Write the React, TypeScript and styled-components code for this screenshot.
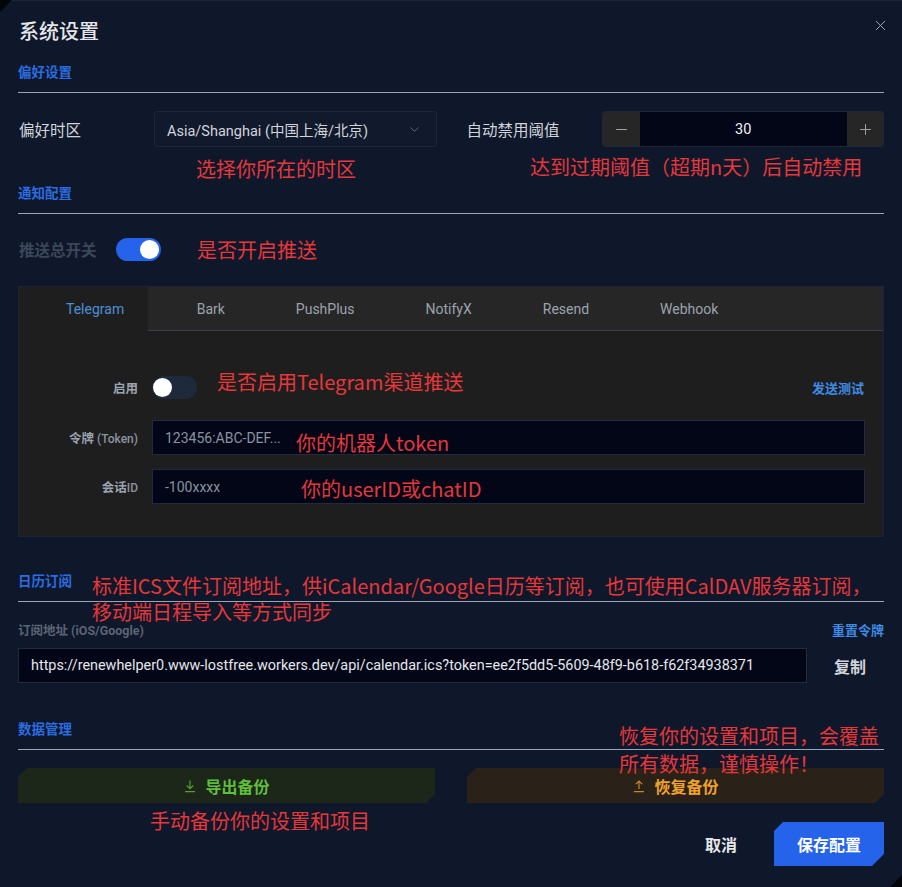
import styled, { createGlobalStyle, css } from 'styled-components';
import { ChevronDown, Minus, Plus, X } from 'lucide-react';

const GlobalStyle = createGlobalStyle`
	html, body {
		margin: 0;
		padding: 0;
		background: #03050a;
	}
	body {
		font-family: Roboto, "Noto Sans CJK SC", sans-serif;
	}
	* {
		box-sizing: border-box;
	}
`;

const Modal = styled.div`
	position: relative;
	width: 902px;
	height: 887px;
	padding: 0 18px;
	background: #0f172a;
	border-top: 1px solid #1c2436;
	clip-path: polygon(12px 0, 100% 0, 100% calc(100% - 12px), calc(100% - 12px) 100%, 0 100%, 0 12px);
	overflow: hidden;
`;

const Header = styled.header`
	display: flex;
	justify-content: space-between;
	align-items: flex-start;
	height: 63px;
`;

const Title = styled.h2`
	margin: 0;
	padding: 18px 0 0 1px;
	font-size: 20px;
	line-height: 26px;
	font-weight: 500;
	color: #e5e7eb;
`;

const CloseBtn = styled.button`
	all: unset;
	display: flex;
	margin: 16px -5px 0 0;
	color: #9ca3af;
	cursor: pointer;
`;

const SectionHead = styled.div<{ $top: number }>`
	margin-top: ${(p) => p.$top}px;
	padding-bottom: 12px;
	border-bottom: 1px solid #9aa5b8;
	font-size: 13.5px;
	line-height: 16px;
	font-weight: 700;
	color: #2b6de0;
`;

const PrefRow = styled.div`
	display: grid;
	grid-template-columns: 1fr 1fr;
	column-gap: 29px;
	margin-top: 18px;
`;

const Field = styled.div`
	display: grid;
	grid-template-columns: 136px 1fr;
	align-items: center;
	height: 36px;
`;

const FieldLabel = styled.span`
	padding-left: 1px;
	font-size: 15.5px;
	color: #d1d5db;
`;

const Select = styled.div`
	display: flex;
	align-items: center;
	justify-content: space-between;
	height: 36px;
	padding: 0 14px 0 12px;
	border: 1px solid #1e2739;
	border-radius: 3px;
	background: #111a2d;
	font-size: 14.5px;
	color: #d1d5db;
`;

const Stepper = styled.div`
	display: grid;
	grid-template-columns: 37px 1fr 36px;
	height: 36px;
	border: 1px solid #1e2739;
	border-radius: 3px;
	overflow: hidden;
`;

const StepBtn = styled.div`
	display: flex;
	align-items: center;
	justify-content: center;
	background: #262626;
	color: #a3a3a3;
`;

const StepValue = styled.div`
	display: flex;
	align-items: center;
	justify-content: center;
	background: #020617;
	font-size: 14.5px;
	color: #f3f4f6;
`;

const SwitchRow = styled.div`
	display: flex;
	align-items: center;
	gap: 19px;
	height: 24px;
	margin-top: 23px;
`;

const DimLabel = styled.span`
	padding-left: 1px;
	font-size: 15.5px;
	font-weight: 700;
	color: #3b4659;
`;

const Switch = styled.div<{ $on?: boolean }>`
	position: relative;
	flex: none;
	width: 45px;
	height: 23px;
	border-radius: 12px;
	background: ${(p) => (p.$on ? '#2563eb' : '#1e293b')};
	&::after {
		content: '';
		position: absolute;
		top: 2px;
		left: ${(p) => (p.$on ? '24px' : '1px')};
		width: 19px;
		height: 19px;
		border-radius: 50%;
		background: #ffffff;
	}
`;

const Panel = styled.div`
	display: flex;
	flex-direction: column;
	height: 251px;
	margin-top: 25px;
	border: 1px solid #1b2335;
	background: #1e1e1e;
`;

const TabBar = styled.div`
	display: flex;
	height: 44px;
	background: #262626;
	border-bottom: 1px solid #3a3f4b;
`;

const Tab = styled.div<{ $active?: boolean }>`
	display: flex;
	align-items: center;
	padding: 0 35.5px;
	font-size: 14px;
	color: #9ca3af;
	${(p) =>
		p.$active &&
		css`
			height: 44px;
			margin-right: 13px;
			padding: 0 24px 0 47px;
			background: #1e1e1e;
			color: #4a90d9;
		`}
`;

const PanelBody = styled.div`
	display: grid;
	grid-template-columns: 119px 1fr;
	grid-auto-rows: 35px;
	grid-template-rows: 34px;
	column-gap: 14px;
	row-gap: 14px;
	align-items: center;
	padding: 41px 18px 0 0;
`;

const FormLabel = styled.span<{ $lift?: boolean }>`
	justify-self: end;
	margin-bottom: ${(p) => (p.$lift ? '4px' : '0')};
	font-size: 12.5px;
	font-weight: 700;
	color: #9ca3af;
	small {
		font-size: 12px;
		font-weight: 500;
		color: #8b93a0;
	}
`;

const EnableLine = styled.div`
	display: flex;
	align-items: center;
	justify-content: space-between;
	margin-bottom: 4px;
	padding-right: 1px;
`;

const LinkText = styled.span`
	font-size: 13px;
	font-weight: 700;
	color: #3d8ce6;
`;

const TextInput = styled.div<{ $bright?: boolean }>`
	display: flex;
	align-items: center;
	height: 35px;
	padding: 0 12px;
	border: 1px solid #222b3c;
	background: #020617;
	font-size: ${(p) => (p.$bright ? '14.4px' : '14px')};
	white-space: nowrap;
	color: ${(p) => (p.$bright ? '#e5e7eb' : '#8b93a1')};
`;

const SubHead = styled.div`
	display: flex;
	justify-content: space-between;
	align-items: center;
	height: 16px;
	margin-top: 19px;
`;

const SubLabel = styled.span`
	font-size: 12.5px;
	font-weight: 700;
	color: #5b6474;
`;

const UrlRow = styled.div`
	display: grid;
	grid-template-columns: 1fr 77px;
	margin-top: 11px;
`;

const CopyBtn = styled.button`
	all: unset;
	display: flex;
	align-items: center;
	justify-content: center;
	padding-left: 9px;
	font-size: 16px;
	font-weight: 700;
	color: #d1d5db;
	cursor: pointer;
`;

const BackupRow = styled.div`
	display: grid;
	grid-template-columns: 1fr 1fr;
	column-gap: 32px;
	margin-top: 18px;
`;

const BackupBtn = styled.button<{ $tone: 'green' | 'amber' }>`
	all: unset;
	display: flex;
	align-items: center;
	justify-content: center;
	gap: 8px;
	height: 35px;
	font-size: 16px;
	font-weight: 700;
	background: ${(p) => (p.$tone === 'green' ? '#1c2619' : '#2a2218')};
	color: ${(p) => (p.$tone === 'green' ? '#5fbf3a' : '#eea12e')};
	clip-path: polygon(9px 0, 100% 0, 100% calc(100% - 9px), calc(100% - 9px) 100%, 0 100%, 0 9px);
	cursor: pointer;
`;

const Footer = styled.div`
	display: flex;
	justify-content: flex-end;
	align-items: center;
	gap: 37px;
	margin-top: 19px;
`;

const CancelBtn = styled.button`
	all: unset;
	font-size: 16px;
	font-weight: 700;
	color: #e5e7eb;
	cursor: pointer;
`;

const SaveBtn = styled.button`
	all: unset;
	display: flex;
	align-items: center;
	justify-content: center;
	width: 110px;
	height: 44px;
	background: #2563eb;
	font-size: 16px;
	font-weight: 700;
	color: #ffffff;
	clip-path: polygon(9px 0, 100% 0, 100% calc(100% - 12px), calc(100% - 12px) 100%, 0 100%, 0 9px);
	cursor: pointer;
`;

const Note = styled.div<{ $x: number; $y: number; $lh?: number }>`
	position: absolute;
	left: ${(p) => p.$x}px;
	top: ${(p) => p.$y}px;
	font-family: "Noto Sans CJK SC", "Liberation Sans", sans-serif;
	font-size: 20px;
	line-height: ${(p) => p.$lh ?? 26}px;
	white-space: nowrap;
	color: #e5383b;
	pointer-events: none;
`;

function DownIcon() {
	return (
		<svg width="14" height="14" viewBox="0 0 14 14" fill="none" stroke="currentColor" strokeWidth="1.2" opacity="0.8">
			<path d="M7 1.5v8M3.8 6.5 7 9.6l3.2-3.1M2 12.6h10" />
		</svg>
	);
}

function UpIcon() {
	return (
		<svg width="14" height="14" viewBox="0 0 14 14" fill="none" stroke="currentColor" strokeWidth="1.2" opacity="0.8">
			<path d="M7 10V2M3.8 5.1 7 2l3.2 3.1M2 12.6h10" />
		</svg>
	);
}

const tabs = ['Telegram', 'Bark', 'PushPlus', 'NotifyX', 'Resend', 'Webhook'];

export default function App() {
	return (
		<>
			<GlobalStyle />
			<Modal>
				<Header>
					<Title>系统设置</Title>
					<CloseBtn>
						<X size={17} strokeWidth={1.4} />
					</CloseBtn>
				</Header>

				<SectionHead $top={0}>偏好设置</SectionHead>
				<PrefRow>
					<Field>
						<FieldLabel>偏好时区</FieldLabel>
						<Select>
							<span>Asia/Shanghai (中国上海/北京)</span>
							<ChevronDown size={15} strokeWidth={1.4} color="#6b7280" />
						</Select>
					</Field>
					<Field>
						<FieldLabel>自动禁用阈值</FieldLabel>
						<Stepper>
							<StepBtn>
								<Minus size={17} strokeWidth={1.4} />
							</StepBtn>
							<StepValue>30</StepValue>
							<StepBtn>
								<Plus size={17} strokeWidth={1.4} />
							</StepBtn>
						</Stepper>
					</Field>
				</PrefRow>

				<SectionHead $top={38}>通知配置</SectionHead>
				<SwitchRow>
					<DimLabel>推送总开关</DimLabel>
					<Switch $on />
				</SwitchRow>

				<Panel>
					<TabBar>
						{tabs.map((t, i) => (
							<Tab key={t} $active={i === 0}>
								{t}
							</Tab>
						))}
					</TabBar>
					<PanelBody>
						<FormLabel $lift>启用</FormLabel>
						<EnableLine>
							<Switch />
							<LinkText>发送测试</LinkText>
						</EnableLine>
						<FormLabel>
							令牌 <small>(Token)</small>
						</FormLabel>
						<TextInput>123456:ABC-DEF...</TextInput>
						<FormLabel>
							会话<small>ID</small>
						</FormLabel>
						<TextInput>-100xxxx</TextInput>
					</PanelBody>
				</Panel>

				<SectionHead $top={36}>日历订阅</SectionHead>
				<SubHead>
					<SubLabel>订阅地址 (iOS/Google)</SubLabel>
					<LinkText>重置令牌</LinkText>
				</SubHead>
				<UrlRow>
					<TextInput $bright>
						https://renewhelper0.www-lostfree.workers.dev/api/calendar.ics?token=ee2f5dd5-5609-48f9-b618-f62f34938371
					</TextInput>
					<CopyBtn>复制</CopyBtn>
				</UrlRow>

				<SectionHead $top={38}>数据管理</SectionHead>
				<BackupRow>
					<BackupBtn $tone="green">
						<DownIcon />
						导出备份
					</BackupBtn>
					<BackupBtn $tone="amber">
						<UpIcon />
						恢复备份
					</BackupBtn>
				</BackupRow>

				<Footer>
					<CancelBtn>取消</CancelBtn>
					<SaveBtn>保存配置</SaveBtn>
				</Footer>

				<Note $x={196} $y={155}>选择你所在的时区</Note>
				<Note $x={530} $y={153}>达到过期阈值（超期n天）后自动禁用</Note>
				<Note $x={197} $y={236}>是否开启推送</Note>
				<Note $x={217} $y={368}>是否启用Telegram渠道推送</Note>
				<Note $x={296} $y={429}>你的机器人token</Note>
				<Note $x={301} $y={475}>你的userID或chatID</Note>
				<Note $x={92} $y={572}>
					标准ICS文件订阅地址，供iCalendar/Google日历等订阅，也可使用CalDAV服务器订阅，
					<br />
					移动端日程导入等方式同步
				</Note>
				<Note $x={150} $y={807}>手动备份你的设置和项目</Note>
				<Note $x={619} $y={721} $lh={28}>
					恢复你的设置和项目，会覆盖
					<br />
					所有数据，谨慎操作！
				</Note>
			</Modal>
		</>
	);
}
